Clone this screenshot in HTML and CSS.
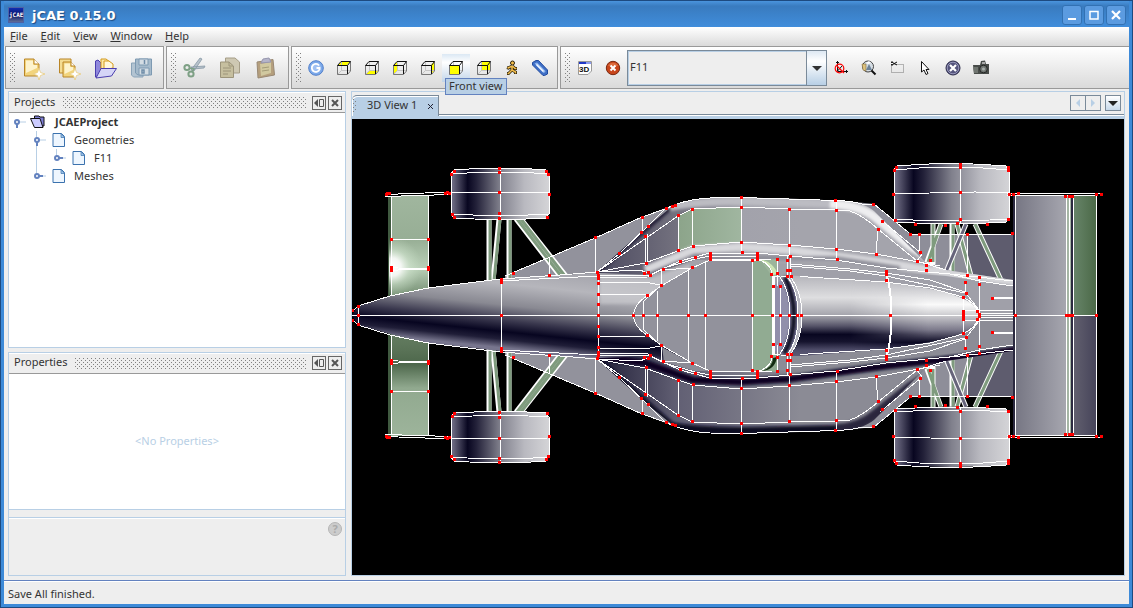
FILE: index.html
```html
<!DOCTYPE html>
<html lang="en">

<head>
    <meta charset="UTF-8">
    <meta name="viewport" content="width=device-width, initial-scale=1.0">
    <title>jCAE 0.15.0</title>
    <link rel="stylesheet" href="styles.css">
</head>

<body>
    <svg class="defs" aria-hidden="true">
        <symbol id="cube" viewBox="0 0 14 14">
            <path d="M4.500 .5V9.500H13.500M.5 13.500L4.500 9.500" fill="none" stroke="#c4c4c4" />
            <path d="M.5 4.500V13.500H10.500L13.500 10V.5" fill="none" stroke="#777" />
            <path d="M.5 4.500H10.500V13M.5 4.500L4 .5H13.500L10.500 4.500" fill="none" stroke="#111" />
        </symbol>
        <symbol id="doc" viewBox="0 0 14 16">
            <path d="M1 1.500H9.500L12.500 4.500V14.500H1Z" fill="#eef6fe" stroke="#3b72ae" />
            <path d="M9 1.500L12.500 5.500H9Z" fill="#9fc4ea" stroke="#3b72ae" stroke-width=".7" />
        </symbol>
        <symbol id="minimize" viewBox="0 0 12 12">
            <path d="M5 2V10L1 6Z" fill="#555" />
            <path d="M6.500 2.500H10.500V9.500H6.500Z" fill="none" stroke="#555" />
        </symbol>
        <symbol id="close" viewBox="0 0 12 12">
            <path d="M3 3L9 9M9 3L3 9" stroke="#555" stroke-width="2" />
        </symbol>
    </svg>

    <div class="window">
        <header class="titlebar">
            <svg class="app-icon" viewBox="0 0 16 16">
                <defs>
                    <linearGradient id="appBg" x2="0" y2="1"><stop stop-color="#1230b8" /><stop offset=".5" stop-color="#081466" /><stop offset="1" stop-color="#68759a" /></linearGradient>
                </defs>
                <rect x=".5" y=".5" width="15" height="15" fill="url(#appBg)" stroke="#4d62a6" />
                <text x="1" y="10" class="app-text">jCAE</text>
            </svg>
            <h1>jCAE 0.15.0</h1>
            <div class="window-buttons">
                <button aria-label="Minimize"><svg viewBox="0 0 12 12"><path d="M2 10H10" stroke="#fff" stroke-width="2" /></svg></button>
                <button aria-label="Maximize"><svg viewBox="0 0 12 12"><path d="M2 2.500H10V10H2Z" fill="none" stroke="#fff" stroke-width="1.500" /></svg></button>
                <button aria-label="Close"><svg viewBox="0 0 12 12"><path d="M2 2L10 10M10 2L2 10" stroke="#fff" stroke-width="2.200" /></svg></button>
            </div>
        </header>

        <nav class="menubar">
            <button><u>F</u>ile</button>
            <button><u>E</u>dit</button>
            <button><u>V</u>iew</button>
            <button><u>W</u>indow</button>
            <button><u>H</u>elp</button>
        </nav>

        <div class="toolbars">
            <div class="toolbar">
                <span class="grip"></span>
                <button class="big" aria-label="New file"><svg viewBox="0 0 24 24">
                    <path d="M3.500 3H13L18 8V20H3.500Z" fill="#f2d47c" stroke="#b98526" />
                    <path d="M5 4.500H12V9H16V12L5 17Z" fill="#fdf3cd" />
                    <path d="M13 3V8H18" fill="#fff" stroke="#b98526" />
                    <path d="M18 12L19.500 16.500L24 18L19.500 19.500L18 24L16.500 19.500L12 18L16.500 16.500Z" fill="#fff" stroke="#e8cd80" stroke-width=".8" />
                </svg></button>
                <button class="big" aria-label="New project"><svg viewBox="0 0 24 24">
                    <path d="M2.500 3H14V17H2.500Z" fill="#f4dc92" stroke="#b98526" />
                    <path d="M6 6H14L18 10V21H6Z" fill="#f2d47c" stroke="#b98526" />
                    <path d="M7.500 7.500H13V11H16V14L7.500 18Z" fill="#fdf3cd" />
                    <path d="M14 6V10H18" fill="#fff" stroke="#b98526" />
                    <path d="M18 12L19.500 16.500L24 18L19.500 19.500L18 24L16.500 19.500L12 18L16.500 16.500Z" fill="#fff" stroke="#e8cd80" stroke-width=".8" />
                </svg></button>
                <button class="big" aria-label="Open"><svg viewBox="0 0 24 24">
                    <path d="M2.500 21V5L5 4L8 7V17Z" fill="#8f88dc" stroke="#4a3eae" />
                    <path d="M8 15V3H13L17 6V14Z" fill="#fbe9a8" stroke="#d49a1c" />
                    <path d="M11 14V5H16L20 8V12Z" fill="#fff8dc" stroke="#d49a1c" />
                    <path d="M3 22L8 12.500H23.500L18.500 20Z" fill="#d5d5f7" stroke="#4a3eae" />
                </svg></button>
                <button class="big" aria-label="Save all"><svg viewBox="0 0 24 24">
                    <path d="M2.500 7H14V21H4.500L2.500 19Z" fill="#b3c4d2" stroke="#8aa3b8" />
                    <path d="M6.500 3H22.500V19H9L6.500 17Z" fill="#a5bacb" stroke="#7e9ab2" />
                    <path d="M10 3H19V9H10ZM10 12H20V19H10Z" fill="#d4dde4" stroke="#7e9ab2" />
                    <path d="M15.500 4V8M13 14H15V17H13Z" fill="none" stroke="#6f8da8" stroke-width="1.500" />
                </svg></button>
            </div>

            <div class="toolbar">
                <span class="grip"></span>
                <button class="big" aria-label="Cut"><svg viewBox="0 0 24 24">
                    <path d="M18 2L20 3L12 15L9 14ZM23 10L22 12L11 13L9 11Z" fill="#b7c1ca" stroke="#8798a6" stroke-width=".8" />
                    <circle cx="5" cy="11.500" r="2.600" fill="none" stroke="#7ea085" stroke-width="2" />
                    <circle cx="9" cy="18" r="2.600" fill="none" stroke="#7ea085" stroke-width="2" />
                    <path d="M7 12L12 13L10 16" fill="none" stroke="#7ea085" stroke-width="1.500" />
                </svg></button>
                <button class="big" aria-label="Copy"><svg viewBox="0 0 24 24">
                    <path d="M7.500 2H17L21.500 6V17H7.500Z" fill="#cec8b3" stroke="#a69e88" />
                    <path d="M2.500 6H11L15.500 10V21.500H2.500Z" fill="#c6bf9f" stroke="#9c947b" />
                    <path d="M5 12H13M5 15H13M5 18H10M11 6V10H15" fill="none" stroke="#9c947b" />
                </svg></button>
                <button class="big" aria-label="Paste"><svg viewBox="0 0 24 24">
                    <path d="M3 6L19 3.500L20.500 19L4 22Z" fill="#b59f7d" stroke="#998974" />
                    <path d="M6 8L17 6V17L7 20Z" fill="#d1c9a0" />
                    <path d="M8 12L15 11M8 15L15 14" stroke="#a39c78" />
                    <path d="M7 7L9 3L15 2L17 6Z" fill="#b5b5ca" stroke="#9797ae" />
                </svg></button>
            </div>

            <div class="toolbar small">
                <span class="grip"></span>
                <button aria-label="Refresh"><svg viewBox="0 0 16 16">
                    <circle cx="8" cy="8" r="7.300" fill="#7ca9ea" stroke="#527fc9" />
                    <circle cx="8" cy="8" r="5" fill="#9fc0f2" />
                    <path d="M11 5.500A4 4 0 1 0 11.500 9.500V8H8.500" fill="none" stroke="#fff" stroke-width="1.800" />
                </svg></button>
                <button aria-label="Top view"><svg class="cube" viewBox="0 0 14 14"><path d="M1 4L4 1H13L10 4Z" fill="#ff0" /><use href="#cube" /></svg></button>
                <button aria-label="Bottom view"><svg class="cube" viewBox="0 0 14 14"><path d="M1 13L4 10H13L10 13Z" fill="#ff0" /><use href="#cube" /></svg></button>
                <button aria-label="Left view"><svg class="cube" viewBox="0 0 14 14"><path d="M1 4L4 1V10L1 13Z" fill="#ff0" /><use href="#cube" /></svg></button>
                <button aria-label="Right view"><svg class="cube" viewBox="0 0 14 14"><path d="M10 4L13 1V10L10 13Z" fill="#ff0" /><use href="#cube" /></svg></button>
                <button class="hover" aria-describedby="tip"><svg class="cube" viewBox="0 0 14 14"><use href="#cube" /><path d="M1 5H10V13H1Z" fill="#ff0" /></svg><span class="tooltip" id="tip" role="tooltip">Front view</span></button>
                <button aria-label="Back view"><svg class="cube" viewBox="0 0 14 14"><path d="M4 1H13V10H4Z" fill="#ff0" /><use href="#cube" /></svg></button>
                <button aria-label="Fit view"><svg viewBox="0 0 16 16">
                    <path d="M8 6L4.500 8L3 7.500M8.500 6L11 8.500L13 8.500M8 6V10L4.500 13.500L3 13.500M8 10L11.500 12V14" fill="none" stroke="#2b210c" stroke-width="3" />
                    <path d="M8 6L4.500 8L3.500 7.500M8.500 6L11 8.500L12.500 8.500M8 6V10L4.500 13.500L3.500 13.500M8 10L11.500 12V13.500" fill="none" stroke="#f3bd4a" stroke-width="1.500" />
                    <circle cx="8.500" cy="3" r="2" fill="#f3bd4a" stroke="#2b210c" />
                </svg></button>
                <button aria-label="Measure"><svg viewBox="0 0 16 16">
                    <path d="M.5 2.500L4 .5H6.500L15.500 10V14L12.500 15.500H11L.5 5Z" fill="#3f6fc6" stroke="#214b9f" />
                    <path d="M2.500 3.500L11.500 13L13.500 12L13 10.500L5 2.500Z" fill="#8fb6ee" />
                    <path d="M4.500 4.500L11.500 11.500" stroke="#f2f7ff" stroke-width="1.500" />
                </svg></button>
            </div>

            <div class="toolbar small last">
                <span class="grip"></span>
                <button aria-label="New 3D view"><svg viewBox="0 0 16 16">
                    <path d="M1.500 1.500H14.500V11L11 14.500H1.500Z" fill="#fff" stroke="#999" />
                    <path d="M2 2H14V4H2Z" fill="#2038c8" /><path d="M9 2H14V4H9Z" fill="#8b9bee" />
                    <text x="2" y="12" class="icon-text">3D</text>
                </svg></button>
                <button aria-label="Stop"><svg viewBox="0 0 16 16">
                    <circle cx="8" cy="8" r="6.700" fill="#c8451b" stroke="#792a12" />
                    <path d="M3 6A5.500 5.500 0 0 1 13 6Z" fill="#dd6b3c" />
                    <path d="M5.500 5.500L10.500 10.500M10.500 5.500L5.500 10.500" stroke="#fff" stroke-width="2" />
                </svg></button>
                <div class="combo">
                    <select aria-label="Current geometry"><option>F11</option></select>
                </div>
                <button aria-label="Hide axes"><svg viewBox="0 0 16 16">
                    <path d="M4.500 1V11.500H15M4.500 11L9 6M3 2.500H6M13.500 10V13" fill="none" stroke="#111" />
                    <circle cx="6.500" cy="8.500" r="4.300" fill="none" stroke="#f00" stroke-width="1.200" />
                    <path d="M3.500 5.500L11 13" stroke="#f00" stroke-width="1.200" />
                </svg></button>
                <button aria-label="Zoom"><svg viewBox="0 0 16 16">
                    <circle cx="7" cy="6.500" r="5.500" fill="#d5dde4" stroke="#444" />
                    <path d="M1 4H5V11L2 10Z" fill="#dfc37e" stroke="#816c3c" stroke-width=".6" />
                    <path d="M5 10L8 4L11 10Z" fill="#6d8297" /><path d="M5 3L8 1L10 3L7 4Z" fill="#fff" />
                    <path d="M10.500 10.500L14.500 14.500" stroke="#111" stroke-width="2" />
                </svg></button>
                <button aria-label="Clip rectangle"><svg viewBox="0 0 16 16">
                    <path d="M2.500 4.500H14.500V12.500H2.500Z" fill="none" stroke="#777" stroke-dasharray="1 1" />
                    <path d="M3.500 2.500L8 5M3.500 4.500L8 2" stroke="#111" /><path d="M2 1.500H4V3H2ZM2 4H4V5.500H2Z" fill="#222" />
                </svg></button>
                <button aria-label="Select"><svg viewBox="0 0 16 16">
                    <path d="M4.500 1.500V12L7 10L9 14.500L11 13.500L9 9.500H12Z" fill="#fff" stroke="#111" />
                </svg></button>
                <button aria-label="Clear selection"><svg viewBox="0 0 16 16">
                    <circle cx="8" cy="8" r="7" fill="#55557d" stroke="#2b2b4a" /><circle cx="8" cy="8" r="5.800" fill="none" stroke="#9696ba" />
                    <path d="M5 5L11 11M11 5L5 11" stroke="#fff" stroke-width="2.200" />
                </svg></button>
                <button aria-label="Screenshot"><svg viewBox="0 0 16 16">
                    <path d="M0 5H7L8 1L12 .5L13 4H16V14H1Z" fill="#484c49" />
                    <path d="M0 7H5V13H1Z" fill="#707570" /><path d="M9 2H12V4H9Z" fill="#aaa" />
                    <circle cx="10.500" cy="9" r="3.800" fill="#707572" stroke="#252725" /><circle cx="10.500" cy="9" r="1.500" fill="#a8b0ad" />
                </svg></button>
            </div>
        </div>

        <main class="content">
            <div class="side">
                <section class="panel projects">
                    <div class="panel-head">
                        <h2>Projects</h2><span class="bumps"></span>
                        <button aria-label="Minimize Projects"><svg><use href="#minimize" /></svg></button>
                        <button aria-label="Close Projects"><svg><use href="#close" /></svg></button>
                    </div>
                    <ul class="tree">
                        <li class="root">
                            <svg class="handle" viewBox="0 0 18 18"><path d="M5 9H14" stroke="#b8cfe5" /><path d="M5 9V15" stroke="#6382bf" stroke-width="2" /><circle cx="5" cy="9" r="2" fill="#fff" stroke="#6382bf" stroke-width="2" /></svg>
                            <svg class="folder" viewBox="0 0 15 14"><path d="M4.500 3V1H9L10 2H14V11H12" fill="#7d7dd4" stroke="#111" /><path d="M.5 3.500H10L13 12.500H4.500Z" fill="#ccccff" stroke="#111" /></svg>
                            <span>JCAEProject</span>
                        </li>
                        <li class="level1">
                            <svg class="handle" viewBox="0 0 18 18"><path d="M4.500 0V18M5 9H14" stroke="#b8cfe5" /><path d="M5 9V15" stroke="#6382bf" stroke-width="2" /><circle cx="5" cy="9" r="2" fill="#fff" stroke="#6382bf" stroke-width="2" /></svg>
                            <svg class="doc"><use href="#doc" /></svg>
                            <span>Geometries</span>
                        </li>
                        <li class="level2">
                            <svg class="handle-long" viewBox="0 0 38 18"><path d="M4.500 0V18M24.500 0V9M25 9H34" stroke="#b8cfe5" /><path d="M25 9H31" stroke="#6382bf" stroke-width="2" /><circle cx="25" cy="9" r="2" fill="#fff" stroke="#6382bf" stroke-width="2" /></svg>
                            <svg class="doc"><use href="#doc" /></svg>
                            <span>F11</span>
                        </li>
                        <li class="level1">
                            <svg class="handle" viewBox="0 0 18 18"><path d="M4.500 0V9M5 9H14" stroke="#b8cfe5" /><path d="M5 9H11" stroke="#6382bf" stroke-width="2" /><circle cx="5" cy="9" r="2" fill="#fff" stroke="#6382bf" stroke-width="2" /></svg>
                            <svg class="doc"><use href="#doc" /></svg>
                            <span>Meshes</span>
                        </li>
                    </ul>
                </section>

                <section class="panel properties">
                    <div class="panel-head">
                        <h2>Properties</h2><span class="bumps"></span>
                        <button aria-label="Minimize Properties"><svg><use href="#minimize" /></svg></button>
                        <button aria-label="Close Properties"><svg><use href="#close" /></svg></button>
                    </div>
                    <p class="empty">&lt;No Properties&gt;</p>
                    <div class="divider"></div>
                    <div class="description"><button class="help" aria-label="Help">?</button></div>
                </section>
            </div>

            <section class="view">
                <div class="tabs">
                    <div class="tab"><span class="grip"></span><button class="tab-name">3D View 1</button><button class="tab-close" aria-label="Close tab"><svg viewBox="0 0 7 7"><path d="M1 1L6 6M6 1L1 6" stroke="#223" /></svg></button></div>
                    <div class="tab-nav">
                        <button aria-label="Previous tab"><svg viewBox="0 0 14 14"><path d="M9 3V11L5 7Z" fill="#b8cfe5" /></svg></button>
                        <button aria-label="Next tab"><svg viewBox="0 0 14 14"><path d="M5 3V11L9 7Z" fill="#b8cfe5" /></svg></button>
                        <button class="tab-list" aria-label="Tab list"><svg viewBox="0 0 14 14"><path d="M2 5H12L7 10Z" fill="#222" /></svg></button>
                    </div>
                </div>

                <svg class="scene" viewBox="352 119 772 456" role="img" aria-label="F11 geometry">
                    <defs>
                        <linearGradient id="tyre"><stop stop-color="#77758c" /><stop offset=".07" stop-color="#4a4860" /><stop offset=".17" stop-color="#080620" /><stop offset=".26" stop-color="#24223a" /><stop offset=".5" stop-color="#80808c" /><stop offset=".75" stop-color="#b9b9c0" /><stop offset="1" stop-color="#d4d4d7" /></linearGradient>
                        <linearGradient id="nose" gradientUnits="userSpaceOnUse" x1="0" y1="209" x2="0" y2="295" gradientTransform="skewY(6)"><stop stop-color="#a2a2aa" /><stop offset=".25" stop-color="#b6b6bc" /><stop offset=".5" stop-color="#898992" /><stop offset=".68" stop-color="#3a384e" /><stop offset=".81" stop-color="#070520" /><stop offset=".9" stop-color="#201e38" /><stop offset="1" stop-color="#77758d" /></linearGradient>
                        <linearGradient id="engine" gradientUnits="userSpaceOnUse" x1="0" y1="270" x2="0" y2="362"><stop stop-color="#aaaab1" /><stop offset=".3" stop-color="#dedee0" /><stop offset=".5" stop-color="#a2a2aa" /><stop offset=".61" stop-color="#555368" /><stop offset=".7" stop-color="#080620" /><stop offset=".78" stop-color="#16142e" /><stop offset=".87" stop-color="#504e6b" /><stop offset="1" stop-color="#68667d" /></linearGradient>
                        <linearGradient id="engineTail" gradientUnits="userSpaceOnUse" x1="0" y1="278" x2="0" y2="354"><stop stop-color="#aeaeb5" /><stop offset=".35" stop-color="#fafafa" /><stop offset=".5" stop-color="#c8c8cc" /><stop offset=".68" stop-color="#7d7b8c" /><stop offset=".85" stop-color="#080620" /><stop offset="1" stop-color="#535170" /></linearGradient>
                        <linearGradient id="tailFade"><stop stop-color="#000" /><stop offset=".6" stop-color="#fff" /></linearGradient>
                        <mask id="tailMask"><rect x="850" y="270" width="130" height="92" fill="url(#tailFade)" /></mask>
                        <linearGradient id="podTop" gradientUnits="userSpaceOnUse" x1="598" y1="0" x2="800" y2="0"><stop stop-color="#4c4a60" /><stop offset=".4" stop-color="#74727f" /><stop offset=".7" stop-color="#a2a2ab" /><stop offset="1" stop-color="#a4a4ac" /></linearGradient>
                        <linearGradient id="podBottom" gradientUnits="userSpaceOnUse" x1="598" y1="0" x2="800" y2="0"><stop stop-color="#23213a" /><stop offset=".4" stop-color="#626074" /><stop offset="1" stop-color="#8b8b95" /></linearGradient>
                        <linearGradient id="podGreen"><stop stop-color="#8ca48a" /><stop offset="1" stop-color="#a0b6a0" /></linearGradient>
                        <linearGradient id="wing" x2="0" y2="1"><stop stop-color="#a0b69e" /><stop offset=".18" stop-color="#97ae95" /><stop offset=".3" stop-color="#b9cfb7" /><stop offset=".4" stop-color="#7e977c" /><stop offset=".64" stop-color="#5a7357" /><stop offset=".7" stop-color="#4d674b" /><stop offset=".8" stop-color="#91a98f" /><stop offset="1" stop-color="#9db49b" /></linearGradient>
                        <radialGradient id="shine" gradientUnits="userSpaceOnUse" cx="392" cy="267" r="30"><stop stop-color="#fff" /><stop offset=".3" stop-color="#fff" stop-opacity=".85" /><stop offset=".6" stop-color="#def0dc" stop-opacity=".4" /><stop offset="1" stop-color="#cfe6cd" stop-opacity="0" /></radialGradient>
                        <linearGradient id="rearWing"><stop stop-color="#777784" /><stop offset="1" stop-color="#a6a6af" /></linearGradient>
                        <linearGradient id="rearGreen"><stop stop-color="#68856a" /><stop offset="1" stop-color="#4a6846" /></linearGradient>
                        <linearGradient id="rearDark"><stop stop-color="#62606f" /><stop offset="1" stop-color="#454359" /></linearGradient>
                        <filter id="soft" filterUnits="userSpaceOnUse" x="352" y="119" width="772" height="456"><feGaussianBlur stdDeviation="1.600" /></filter>
                        <path id="wheelFront" d="M451 174L454 170Q500 166 546 170L549 175V214L546 218Q500 221 454 218L451 214Z" />
                        <path id="wheelRear" d="M894 170L897 166Q951 161 1006 166L1009 170V219L1006 222Q951 226 897 222L894 219Z" />
                        <path id="pod" d="M597 272L647 227L674 205Q690 199 710 198L741 197.500L800 199L836 200.500Q862 201 874 211L925 262L946 270L1013 280V316H598Z" />
                        <clipPath id="podClip"><use href="#pod" /></clipPath>
                        <path id="opening" d="M633 315.500Q635 303 647 296L661 286L692 268L710 260H758Q770 262 773 276V355Q770 369 758 371H710L692 363L661 345L647 335Q635 328 633 315.500Z" />
                    </defs>

                    <!-- front wing -->
                    <path d="M388 196H392V436H388Z" fill="#405a40" />
                    <path d="M391 196H429V436H391Z" fill="url(#wing)" />
                    <path d="M389 236H428V298H389Z" fill="url(#shine)" />

                    <!-- floor and struts, drawn once and mirrored on the centre line -->
                    <g id="chassis">
                        <path d="M505 276L595 238L642 217L674 205L700 240V290H505Z" fill="#92929c" />
                        <path d="M836 200L874 204L911 234H968V285H836Z" fill="#8e8e99" />
                        <path d="M967 234H1013V285H967Z" fill="#5e5c6e" />
                        <g fill="none">
                            <path d="M489 219V283M499 219L493 281M509 219V278M516 219L560 276M521 219L566 276M933 224V262L927 262L941 224M952 224V276M957 224L971 276M975 224L1001 280" stroke="#fff" stroke-width="5" />
                            <path d="M490 219V283M500 219L494 281M510 219V278M517 219L561 276M521 219L565 276M933 224V262M928 262L941 224M953 224V276M957 224L971 276M975 224L1001 280" stroke="#7f9b7e" stroke-width="3" />
                            <path d="M966 224L946 272" stroke="#fff" stroke-width="5" />
                            <path d="M966 224L946 272" stroke="#66647a" stroke-width="3" />
                        </g>
                    </g>
                    <use href="#chassis" transform="matrix(1 0 0 -1 0 631)" />

                    <!-- side pods -->
                    <use href="#pod" fill="url(#podTop)" />
                    <g clip-path="url(#podClip)">
                        <path d="M678 216L692 209L741 207V242L693 246L678 251Z" fill="url(#podGreen)" />
                        <g fill="none" filter="url(#soft)">
                            <path d="M597 272L647 228L672 206" stroke="#25233a" stroke-width="5" />
                            <path d="M670 207Q690 202 741 201L836 204" stroke="#bcbcc2" stroke-width="8" />
                            <path d="M830 204Q860 205 876 218L910 246L946 268" stroke="#eeeef0" stroke-width="9" />
                            <path d="M645 270L693 250L741 247L790 250L886 263L960 275L1020 282" stroke="#d8d8dc" stroke-width="8" />
                            <path d="M680 261L710 258H836L900 268" stroke="#8d8d98" stroke-width="4" />
                        </g>
                        <path d="M760 262L886 272L946 276L1013 286V316H760Z" fill="#a0a0a9" />
                    </g>
                    <g transform="matrix(1 0 0 -1 0 631)">
                        <use href="#pod" fill="url(#podBottom)" />
                        <g clip-path="url(#podClip)">
                            <g fill="none" filter="url(#soft)">
                                <path d="M597 272L647 228L672 206" stroke="#0b0924" stroke-width="5" />
                                <path d="M665 206Q690 200 741 200L836 202" stroke="#0a0823" stroke-width="8" />
                                <path d="M836 202Q860 203 876 217L910 244L946 266" stroke="#29273d" stroke-width="10" />
                                <path d="M597 275L645 268L693 251L741 249L790 252L886 265L960 273L1020 282" stroke="#080620" stroke-width="7" />
                            </g>
                            <path d="M690 262L757 258L886 271L946 277L1013 286V316H690Z" fill="#8c8c96" />
                        </g>
                    </g>

                    <!-- nose and engine cover -->
                    <path d="M352 315L358 306L390 296L428 288L500 279L560 275L600 273L650 275L695 260H740V371H695L650 356L600 358L560 356L500 351L428 343L390 334L358 325Z" fill="url(#nose)" />
                    <path d="M600 277L650 278L690 264V298L640 304H600Z" fill="#d0d0d4" filter="url(#soft)" opacity=".6" />
                    <path d="M662 347L692 363L740 371H695L664 362Z" fill="#8c8c96" />
                    <path d="M785 275L800 276L886 282L930 289Q979 299 979 315.500Q979 332 930 342L886 349L800 356H785Z" fill="url(#engine)" />
                    <path d="M850 278L886 282L930 289Q979 299 979 315.500Q979 332 930 342L886 349L850 352Z" fill="url(#engineTail)" mask="url(#tailMask)" />

                    <!-- cockpit -->
                    <use href="#opening" fill="#92929c" />
                    <path d="M753 260H760Q773 263 773 276V355Q773 369 760 371H753Z" fill="#91ab92" />
                    <path d="M760 260L777 259V276H772Z" fill="#9cb59b" />
                    <path d="M760 371L777 372V355H772Z" fill="#91ab92" />
                    <path d="M758 260Q770 261 773 275L778 274Q773 262 760 259Z" fill="#cfe7b5" />
                    <path d="M762 371Q773 367 773 358L777 357Q775 370 762 371Z" fill="#122b11" />
                    <path d="M773 286L787 276Q798 292 798 315.500Q798 340 787 356L773 350Z" fill="#918fab" />
                    <path d="M785 277Q794 296 794 315.500Q794 337 784 354" fill="none" stroke="#0b0924" stroke-width="5" filter="url(#soft)" />
                    <path d="M788 277Q800 292 800 315.500Q800 340 788 355" fill="none" stroke="#b9b9c2" stroke-width="3" />

                    <!-- rear wing -->
                    <path d="M1016 195H1066V436H1016Z" fill="url(#rearWing)" />
                    <path d="M1066 195H1073V436H1066Z" fill="#a5b5a5" />
                    <path d="M1073 195H1097V315H1073Z" fill="url(#rearGreen)" />
                    <path d="M1073 316H1097V436H1073Z" fill="url(#rearDark)" />
                    <path d="M1014 195V436M1072 197V436" stroke="#2b2940" stroke-width="2" />

                    <!-- wheels -->
                    <use href="#wheelFront" fill="url(#tyre)" />
                    <use href="#wheelFront" fill="url(#tyre)" y="243" />
                    <use href="#wheelRear" fill="url(#tyre)" />
                    <use href="#wheelRear" fill="url(#tyre)" y="243" />

                    <!-- edges -->
                    <path class="edge" d="M352 315.500H1097M598.500 272V359M643.500 302V329M657.500 291V341M688.500 270V361M705.500 261V370M752.500 260V371M772.500 276V355M774.500 276V355M780.500 285V346M963.500 297V334M979.500 277V354M501.500 279V352M358.500 306V325" />
                    <use class="edge" href="#opening" />
                    <g id="edges">
                        <g class="edge">
                            <path d="M352 312L358 306L390 296L428 288L500 279L560 275L598 272L640 270L650 274M500 281L598 276L650 275L680 261L695 257L710 253H757L790 256L836 260L886 268L960 275L1013 281" />
                            <path d="M505 276L595 238L642 217L665 209L674 205Q690 199 710 198L741 197.500L836 200.500Q852 201 862 204H874L911 234.500H1013M919.500 234V252M967.500 234V275" />
                            <path d="M595.500 238V272M549.500 258V274M642.500 217V232M645.500 235V266M647.500 234V264M678.500 215V250M692.500 209V247M741.500 198V252M789.500 209V256M836.500 200V260" />
                            <path d="M597 272L619 254L647 227L665 209L674 205M597 272L678 216L692 209L741 207L789 209L836 210L850 211Q862 215 878 229L917 261L946 270M597 272L645 263L678 251L693 246L741 242L789 245L836 249L876 254L940 266M878 229L876 254M880 219L922 254L917 261" />
                            <path d="M598 278L648 277L664 268L695 259L710 256H757V260M598 282.500H647L661 285M598 294.500L647 295M661 285V270L692 268M643 302L661 285" />
                            <path d="M710 260L772 259H777.500V286M787.500 256V276M790.500 256V276M772 276L780 277Q790 291 790 315M781 276L787 276Q798 290 798 315M790 276Q802 292 802 315M790 264L850 269L886 273L930 280L965 292L979 310M800 276.500L886 282L930 288L963 297Q977 304 979 315M790 266L850 271L886 276L965 293" />
                            <path d="M965.500 283V293M1013 310.500H963M1013 313.500H979M946 273L979 281L1013 286" />
                            <path d="M886 273Q892 291 891 315M992 298H1013" stroke-width="2" />
                            <path d="M391 239.500H429M391 267.500L428 270M391 270.500L428 268M391.500 196V296M428.500 196V289M385 194.500L451 192M385 196.500L451 194.500" />
                            <path d="M500.500 168V218M451 192.500H475L549 193M451 174Q500 170 549 174M451 214Q500 217 549 214" />
                            <path d="M960.500 164V224M894 194L930 193L975 192L1009 193M894 170Q951 164 1009 170M894 219Q951 223 1009 219" />
                            <path d="M1007 193.500H1103M1007 195.500H1097M1015.500 195V315M1066.500 195V315M1069.500 195V315M1073.500 195V315M1096.500 195V315" />
                        </g>
                        <use class="edge" href="#wheelFront" />
                        <use class="edge" href="#wheelRear" />
                        <path class="node" transform="translate(.5 .5)" d="M352 310h0M358 306h0M386 194h0M387 193h0M389 193h0M391 239h0M391 267h0M391 270h0M428 239h0M428 267h0M428 269h0M445 193h0M447 192h0M449 193h0M451 174h0M454 171h0M499 168h0M499 172h0M499 192h0M499 213h0M499 218h0M546 171h0M548 174h0M549 194h0M452 214h0M454 217h0M547 217h0M501 279h0M501 282h0M513 273h0M549 275h0
                            M595 237h0M597 272h0M598 275h0M598 278h0M598 283h0M598 294h0M598 304h0M619 253h0M642 217h0M641 232h0M645 236h0M648 226h0M646 263h0M644 273h0M648 272h0M650 275h0M647 295h0M661 285h0M663 269h0M666 208h0M672 206h0M675 205h0M678 215h0M678 250h0M680 261h0M692 209h0M693 246h0M695 257h0M692 267h0M710 253h0M710 256h0M710 259h0M741 197h0M741 207h0M741 242h0M742 252h0M757 253h0M757 256h0M757 259h0M752 260h0M771 274h0M777 259h0M777 273h0M773 286h0M780 286h0M787 260h0M787 270h0M787 276h0M790 256h0M790 270h0M791 276h0M789 209h0M789 245h0
                            M835 200h0M836 210h0M836 249h0M837 259h0M873 204h0M882 221h0M878 229h0M876 254h0M910 234h0M919 234h0M920 252h0M917 261h0M926 265h0M926 270h0M930 260h0M886 271h0M886 274h0M886 280h0M963 297h0M965 282h0M966 293h0M967 275h0M967 234h0M979 277h0M979 284h0M992 298h0M1012 233h0
                            M894 170h0M896 167h0M893 194h0M895 220h0M915 224h0M960 164h0M960 167h0M960 192h0M960 219h0M957 223h0M945 225h0M987 224h0M1008 167h0M1008 170h0M1008 219h0M1009 194h0M1013 194h0M1018 193h0M1065 196h0M1069 196h0M1072 196h0M1096 194h0M1101 194h0M963 311h0M963 314h0M977 311h0M979 314h0" />
                    </g>
                    <use href="#edges" transform="matrix(1 0 0 -1 0 631)" />
                    <path class="node" transform="translate(.5 .5)" d="M358 315h0M501 315h0M598 315h0M633 315h0M643 315h0M657 315h0M688 315h0M705 315h0M752 315h0M772 315h0M780 315h0M789 315h0M797 315h0M801 315h0M890 315h0M1015 315h0M1066 315h0M1069 315h0M1072 315h0M1096 315h0" />
                </svg>
            </section>
        </main>

        <footer class="status">Save All finished.</footer>
    </div>
</body>

</html>
```
FILE: styles.css
```css
* {
    box-sizing: border-box;
}

body {
    margin: 0;
    font-family: "Noto Sans", sans-serif;
    font-size: 11px;
    line-height: 16px;
    color: #333;
}

button {
    font: inherit;
    color: inherit;
    padding: 0;
    border: none;
    background: none;
}

.defs {
    display: none;
}

.window {
    display: flex;
    flex-direction: column;
    height: 100vh;
    border: 1px solid #1d4a80;
    padding: 0 3px 3px;
    background: #3d8ad8;
}

.titlebar {
    display: flex;
    align-items: center;
    flex: 0 0 26px;
    gap: 8px;
    padding: 1px 3px 0 4px;
    background: linear-gradient(#4a94dd, #397bbf 20%, #408ddb);
}

.titlebar h1 {
    flex: 1;
    margin: 0;
    padding-top: 2px;
    font: bold 13px/20px "DejaVu Sans", sans-serif;
    color: #fff;
    text-shadow: 1px 1px 1px #1d4a80;
}

.app-icon {
    width: 16px;
    height: 16px;
}

.app-text {
    font: bold 6px "DejaVu Sans Mono", monospace;
    fill: #fff;
}

.icon-text {
    font: bold 8px "Liberation Sans", sans-serif;
    fill: #111;
}

.window-buttons {
    display: flex;
    gap: 2px;
}

.window-buttons button {
    width: 20px;
    height: 20px;
    padding: 3px;
    border: 1px solid #3271b3;
    border-radius: 3px;
    background: #5b9be0;
}

button svg {
    display: block;
}

.window-buttons svg {
    width: 12px;
    height: 12px;
}

.menubar {
    display: flex;
    flex: 0 0 19px;
    gap: 1px;
    background: linear-gradient(#fff, #dadada);
}

.menubar button {
    padding: 0 6px 2px;
}

.toolbars {
    display: flex;
    flex: 0 0 43px;
    gap: 2px;
    padding-left: 1px;
    background: #eee;
}

.toolbar {
    display: flex;
    align-items: center;
    padding: 0 4px;
    border: 1px solid #999;
    background: linear-gradient(#fff, #dadada);
}

.toolbar.small {
    padding-right: 3px;
}

.toolbar.last {
    flex: 1;
    border-right: none;
}

.grip,
.bumps {
    background: url("data:image/svg+xml,%3Csvg xmlns='http://www.w3.org/2000/svg' width='4' height='4'%3E%3Cpath d='M0 0h1v1H0zM2 2h1v1H2z' fill='%23808080'/%3E%3C/svg%3E");
}

.toolbar .grip {
    width: 5px;
    height: 29px;
}

.small .grip {
    margin-right: 1px;
}

.toolbar button {
    position: relative;
    display: flex;
    align-items: center;
    justify-content: center;
    width: 28px;
    height: 28px;
}

.toolbar button.big {
    width: 36px;
}

.toolbar svg {
    width: 16px;
    height: 16px;
}

.toolbar .big svg {
    width: 24px;
    height: 24px;
}

.toolbar .cube {
    width: 14px;
    height: 14px;
}

.toolbar .hover {
    background: linear-gradient(#dbe8f4, #fff 30%, #c2d5e9);
}

.tooltip {
    position: absolute;
    left: 3px;
    top: 24px;
    z-index: 2;
    padding: 0 4px 1px 3px;
    border: 1px solid #6382bf;
    background: #b8cfe5;
    line-height: 14px;
    white-space: nowrap;
}

.combo {
    position: relative;
    width: 200px;
    height: 36px;
}

.combo select {
    width: 100%;
    height: 100%;
    padding: 0 24px 2px 2px;
    appearance: none;
    border: 1px solid #7a8a99;
    border-radius: 0;
    outline: 1px solid #b8cfe5;
    outline-offset: -2px;
    background: #eee;
    font: inherit;
    color: #333;
}

.combo::before {
    content: "";
    position: absolute;
    right: 1px;
    top: 1px;
    bottom: 1px;
    width: 19px;
    border-left: 1px solid #7a8a99;
    background: linear-gradient(#dde8f3, #fff 30%, #b8cfe5);
}

.combo::after {
    content: "";
    position: absolute;
    right: 5px;
    top: 16px;
    border: 5px solid transparent;
    border-top-color: #333;
    border-bottom: none;
}

.content {
    display: flex;
    flex: 1;
    gap: 5px;
    min-height: 0;
    padding: 2px 4px 4px;
    background: #eee;
}

.side {
    display: flex;
    flex-direction: column;
    flex: 0 0 338px;
    gap: 4px;
}

.panel {
    display: flex;
    flex-direction: column;
    min-height: 0;
    border: 1px solid #b8cfe5;
    background: #fff;
}

.projects {
    flex: 257;
}

.properties {
    flex: 224;
}

.panel-head {
    display: flex;
    align-items: center;
    flex: 0 0 21px;
    gap: 2px;
    padding: 0 3px 0 5px;
    border-top: 1px solid #fff;
    border-bottom: 1px solid #999;
    background: #eee;
}

.panel-head h2 {
    margin: 0;
    padding-bottom: 2px;
    font-size: 11px;
    font-weight: normal;
}

.bumps {
    flex: 1;
    height: 11px;
    margin: 0 4px 0 6px;
}

.panel-head button {
    width: 14px;
    height: 14px;
    border: 1px solid #666;
}

.panel-head svg {
    width: 12px;
    height: 12px;
}

.tree {
    flex: 1;
    margin: 0;
    padding: 0 3px;
    list-style: none;
}

.tree li {
    display: flex;
    align-items: center;
    height: 18px;
}

.tree .level1,
.tree .level2 {
    padding-left: 20px;
}

.handle {
    width: 18px;
    height: 18px;
}

.handle-long {
    width: 38px;
    height: 18px;
}

.folder {
    width: 15px;
    height: 14px;
    margin-right: 10px;
}

.doc {
    width: 14px;
    height: 16px;
    margin: 0 8px 0 2px;
}

.root {
    font-weight: bold;
}

.empty {
    display: flex;
    align-items: center;
    justify-content: center;
    flex: 1;
    margin: 0;
    color: #b8cfe5;
}

.divider {
    height: 9px;
    border: solid #b8cfe5;
    border-width: 1px 0;
    background: #eee;
}

.description {
    display: flex;
    justify-content: flex-end;
    align-items: flex-start;
    height: 57px;
    padding: 3px;
    border-top: 1px solid #fff;
    background: #eee;
}

.help {
    width: 14px;
    height: 14px;
    border: 1px solid #b5b5b5;
    border-radius: 50%;
    background: #ccc;
    color: #aaa;
    font-weight: bold;
    line-height: 12px;
}

.view {
    display: flex;
    flex-direction: column;
    flex: 1;
    min-width: 0;
    border: 1px solid #b8cfe5;
    background: #b8cfe5;
}

.tabs {
    display: flex;
    justify-content: space-between;
    flex: 0 0 27px;
    padding-top: 3px;
    background: linear-gradient(#eee 22px, #7a8a99 22px, #7a8a99 23px, #fff 23px, #fff 24px, #b8cfe5 24px);
}

.tab {
    display: flex;
    align-items: center;
    height: 21px;
    padding: 0 4px 0 1px;
    border: solid #7a8a99;
    border-width: 1px 1px 0 0;
    border-radius: 5px 0 0 0;
    background: #b8cfe5;
    box-shadow: inset 1px 1px #fff;
}

.tab .grip {
    width: 4px;
    height: 14px;
}

.tab-name {
    padding: 0 10px 3px;
}

.tab-close svg {
    width: 7px;
    height: 7px;
}

.tab-nav {
    display: flex;
    padding-right: 3px;
}

.tab-nav button {
    width: 16px;
    height: 16px;
    border: 1px solid #7a8a99;
}

.tab-nav button + button {
    margin-left: -1px;
}

.tab-nav .tab-list.tab-list {
    margin-left: 4px;
    background: linear-gradient(#fff, #c8d9ea);
}

.tab-nav svg {
    width: 14px;
    height: 14px;
}

.scene {
    display: block;
    flex: 1;
    width: 100%;
    min-height: 0;
    background: #000;
}

.edge {
    fill: none;
    stroke: #fff;
    shape-rendering: crispEdges;
}

.node {
    fill: none;
    stroke: #f00;
    stroke-width: 3px;
    stroke-linecap: square;
    shape-rendering: crispEdges;
}

.status {
    flex: 0 0 24px;
    padding: 5px 4px 0;
    border-top: 1px solid #6382bf;
    box-shadow: inset 0 1px #fff;
    background: #eee;
}
```
